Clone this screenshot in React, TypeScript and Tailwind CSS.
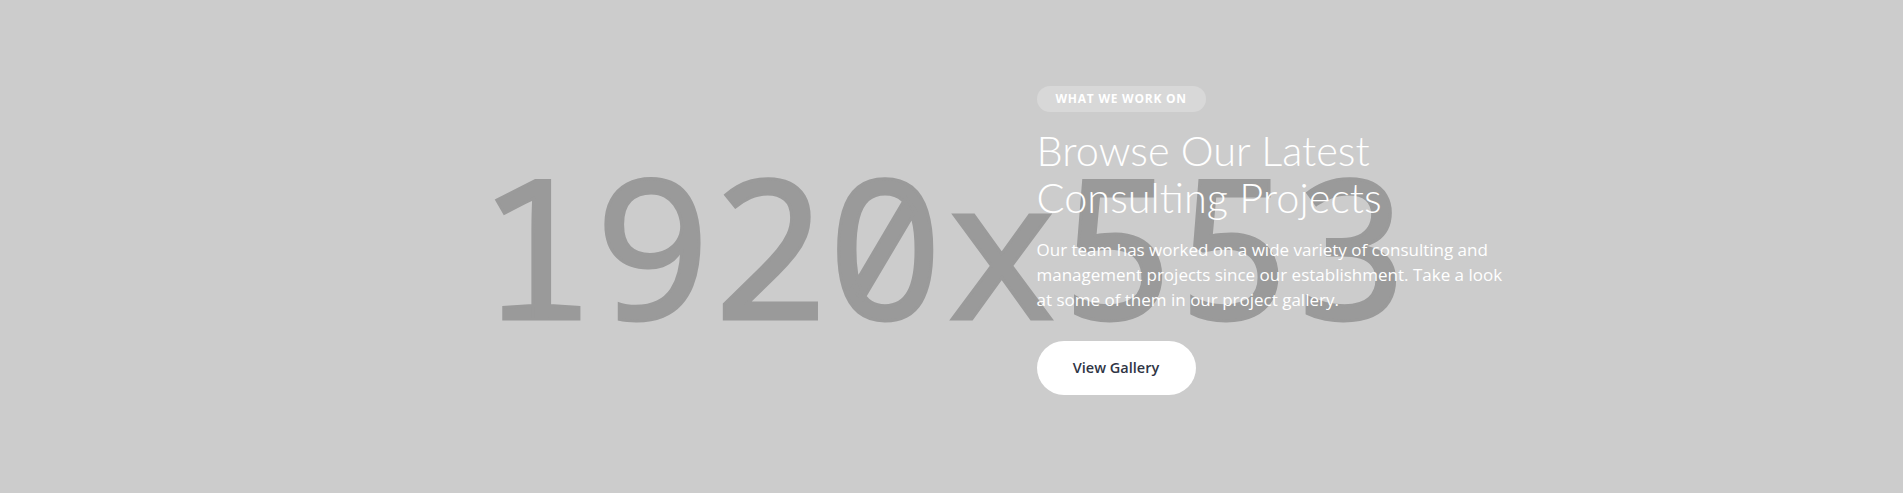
import React from "react";

export default function App() {
  return (
    <section className="grid h-[493px] w-full overflow-hidden bg-[#cccccc]">
      <div className="col-start-1 row-start-1 flex items-center justify-center pb-[5px] pr-[16px] select-none">
        <span className="font-['Noto_Sans_Mono','Liberation_Mono',monospace] text-[194px] leading-none text-[#9a9a9a] [-webkit-text-stroke:3px_#9a9a9a]">
          1920x553
        </span>
      </div>
      <div className="col-start-1 row-start-1 grid grid-cols-2">
        <div />
        <div className="pl-[85px] pt-[85px] font-['Open_Sans',sans-serif]">
          <div className="inline-flex h-[26px] items-center rounded-full bg-[#d8d8d8] px-[19px] text-[12px] font-bold uppercase tracking-[0.75px] text-white">
            What we work on
          </div>
          <h2 className="mt-[15px] font-['Lato',sans-serif] text-[41.5px] font-light leading-[47px] text-white">
            Browse Our Latest
            <br />
            Consulting Projects
          </h2>
          <p className="mt-[16px] w-[480px] text-[17px] leading-[25px] text-white">
            Our team has worked on a wide variety of consulting and management projects since our establishment. Take a look at some of them in our project gallery.
          </p>
          <button className="mt-[29px] flex h-[54px] w-[159px] items-center justify-center rounded-full bg-white text-[14.5px] font-semibold text-[#2f3545]">
            View Gallery
          </button>
        </div>
      </div>
    </section>
  );
}
